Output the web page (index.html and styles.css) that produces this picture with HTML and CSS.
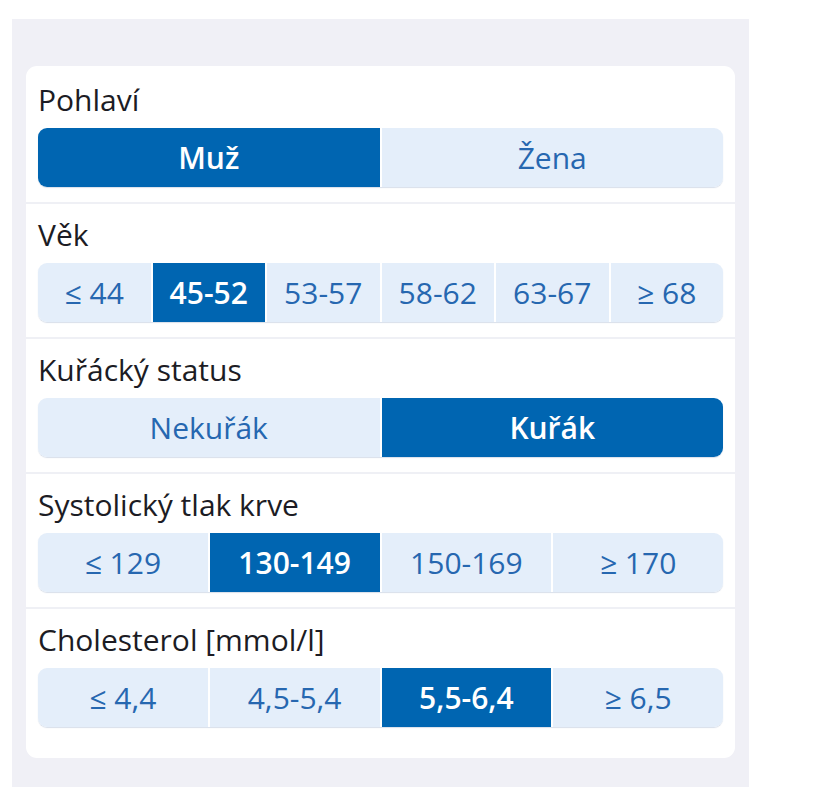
FILE: index.html
```html
<!DOCTYPE html>
<html lang="cs">
<head>
<meta charset="utf-8">
<title>Rizikové faktory</title>
<link rel="stylesheet" href="styles.css">
</head>
<body>
<div class="panel">
  <div class="card">
    <div class="row">
      <div class="label">Pohlaví</div>
      <div class="group">
        <div class="seg active">Muž</div>
        <div class="seg">Žena</div>
      </div>
    </div>
    <div class="row">
      <div class="label">Věk</div>
      <div class="group">
        <div class="seg">≤ 44</div>
        <div class="seg active">45-52</div>
        <div class="seg">53-57</div>
        <div class="seg">58-62</div>
        <div class="seg">63-67</div>
        <div class="seg">≥ 68</div>
      </div>
    </div>
    <div class="row">
      <div class="label">Kuřácký status</div>
      <div class="group">
        <div class="seg">Nekuřák</div>
        <div class="seg active">Kuřák</div>
      </div>
    </div>
    <div class="row">
      <div class="label">Systolický tlak krve</div>
      <div class="group">
        <div class="seg">≤ 129</div>
        <div class="seg active">130-149</div>
        <div class="seg">150-169</div>
        <div class="seg">≥ 170</div>
      </div>
    </div>
    <div class="row">
      <div class="label">Cholesterol [mmol/l]</div>
      <div class="group">
        <div class="seg">≤ 4,4</div>
        <div class="seg">4,5-5,4</div>
        <div class="seg active">5,5-6,4</div>
        <div class="seg">≥ 6,5</div>
      </div>
    </div>
  </div>
</div>
</body>
</html>
```
FILE: styles.css
```css
html, body {
  margin: 0;
  padding: 0;
  background: #ffffff;
}

body {
  font-family: "Open Sans", "Noto Sans", "DejaVu Sans", sans-serif;
}

.panel {
  margin: 19px 0 0 12px;
  width: 737px;
  box-sizing: border-box;
  padding: 47px 14px 29px;
  background: #f0f0f6;
}

.card {
  background: #ffffff;
  border-radius: 11px;
  padding: 3px 0 16px;
}

.row {
  padding: 13px 12px 15px;
}

.row + .row {
  border-top: 2px solid #eff0f5;
}

.label {
  font-size: 30px;
  line-height: 36px;
  height: 36px;
  color: #1c1c24;
  margin-bottom: 10px;
}

.group {
  display: flex;
  gap: 2px;
  height: 59px;
  border-radius: 9px;
  overflow: hidden;
  box-shadow: 0 1px 1px rgba(40, 80, 140, 0.18);
}

.seg {
  flex: 1 1 0;
  display: flex;
  align-items: center;
  justify-content: center;
  background: #e4eefa;
  color: #2667b0;
  font-size: 30px;
}

.seg.active {
  background: #0065b1;
  color: #ffffff;
  font-weight: 600;
}
```
